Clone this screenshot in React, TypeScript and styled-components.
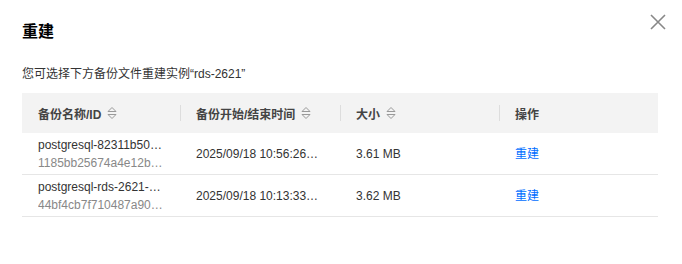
import styled, { createGlobalStyle } from 'styled-components';

const GlobalStyle = createGlobalStyle`
  body {
    margin: 0;
    background: #fff;
    font-family: 'Liberation Sans', 'Noto Sans CJK SC', sans-serif;
    color: #333;
  }
`;

type Backup = {
  name: string;
  id: string;
  time: string;
  size: string;
};

const backups: Backup[] = [
  {
    name: 'postgresql-82311b50a1c4-full',
    id: '1185bb25674a4e12b9c0d7',
    time: '2025/09/18 10:56:26至2025/09/18 10:57:02',
    size: '3.61 MB',
  },
  {
    name: 'postgresql-rds-2621-manual',
    id: '44bf4cb7f710487a90e2c1',
    time: '2025/09/18 10:13:33至2025/09/18 10:14:05',
    size: '3.62 MB',
  },
];

const SortIcon = () => (
  <SortSvg viewBox="0 0 10 14" width="10" height="14">
    <path d="M1 5.5 L5 1.5 L9 5.5 Z" fill="none" stroke="#999" strokeWidth="1" strokeLinejoin="round" />
    <path d="M1 8.5 L5 12.5 L9 8.5 Z" fill="none" stroke="#999" strokeWidth="1" strokeLinejoin="round" />
  </SortSvg>
);

const CloseIcon = () => (
  <svg viewBox="0 0 16 16" width="16" height="16">
    <path d="M1 1 L15 15 M15 1 L1 15" stroke="#888" strokeWidth="1.6" />
  </svg>
);

const App = () => {
  return (
    <Dialog>
      <GlobalStyle />
      <CloseButton aria-label="close">
        <CloseIcon />
      </CloseButton>
      <Title>重建</Title>
      <Subtitle>您可选择下方备份文件重建实例“rds-2621”</Subtitle>
      <Table>
        <HeadRow>
          <HeadCell>
            备份名称/ID <SortIcon />
          </HeadCell>
          <HeadCell $divider>
            备份开始/结束时间 <SortIcon />
          </HeadCell>
          <HeadCell $divider>
            大小 <SortIcon />
          </HeadCell>
          <HeadCell $divider>操作</HeadCell>
        </HeadRow>
        {backups.map((b) => (
          <Row key={b.id}>
            <Cell>
              <Ellipsis>{b.name}</Ellipsis>
              <Ellipsis $muted>{b.id}</Ellipsis>
            </Cell>
            <Cell>
              <Ellipsis>{b.time}</Ellipsis>
            </Cell>
            <Cell>{b.size}</Cell>
            <Cell>
              <Link href="#">重建</Link>
            </Cell>
          </Row>
        ))}
      </Table>
    </Dialog>
  );
};

export default App;

const Dialog = styled.div`
  position: relative;
  width: 682px;
  height: 264px;
  box-sizing: border-box;
  padding: 20px 24px 0 22px;
`;

const CloseButton = styled.button`
  position: absolute;
  top: 14px;
  right: 16px;
  padding: 0;
  border: none;
  background: none;
  display: flex;
  cursor: pointer;
`;

const Title = styled.h2`
  margin: 0;
  font-size: 16px;
  line-height: 24px;
  font-weight: bold;
  color: #000;
`;

const Subtitle = styled.p`
  margin: 21px 0 10px;
  font-size: 12px;
  line-height: 18px;
  color: #333;
`;

const Table = styled.div`
  width: 636px;
`;

const HeadRow = styled.div`
  display: grid;
  grid-template-columns: 158px 160px 159px 159px;
  height: 40px;
  background: #f3f3f3;
  align-items: center;
`;

const HeadCell = styled.div<{ $divider?: boolean }>`
  position: relative;
  display: flex;
  align-items: center;
  gap: 6px;
  padding: 0 16px;
  font-size: 12px;
  font-weight: bold;
  color: #444;
  ${({ $divider }) =>
    $divider &&
    `&::before {
      content: '';
      position: absolute;
      left: 0;
      top: 50%;
      width: 1px;
      height: 16px;
      margin-top: -8px;
      background: #ddd;
    }`}
`;

const SortSvg = styled.svg`
  display: block;
`;

const Row = styled.div`
  display: grid;
  grid-template-columns: 158px 160px 159px 159px;
  height: 41px;
  border-bottom: 1px solid #e6e6e6;
  align-items: center;
`;

const Cell = styled.div`
  min-width: 0;
  padding: 0 16px;
  font-size: 12px;
  line-height: 18px;
  color: #333;
`;

const Ellipsis = styled.div<{ $muted?: boolean }>`
  overflow: hidden;
  white-space: nowrap;
  text-overflow: ellipsis;
  color: ${({ $muted }) => ($muted ? '#888' : '#333')};
`;

const Link = styled.a`
  color: #006eff;
  text-decoration: none;
`;
